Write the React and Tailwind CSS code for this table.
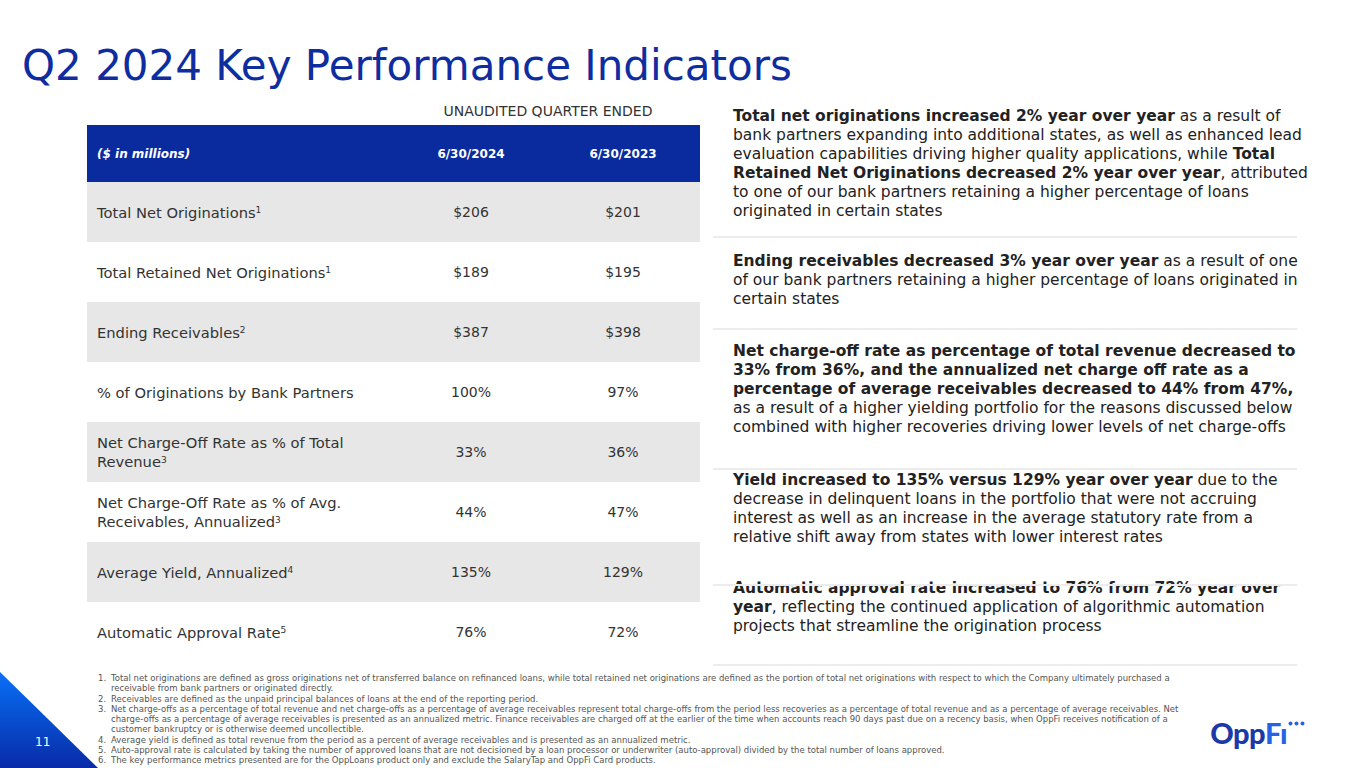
import React from 'react'

const rows = [
  { label: <>Total Net Originations<sup className="text-[9px]">1</sup></>, a: '$206', b: '$201', grey: true },
  { label: <>Total Retained Net Originations<sup className="text-[9px]">1</sup></>, a: '$189', b: '$195' },
  { label: <>Ending Receivables<sup className="text-[9px]">2</sup></>, a: '$387', b: '$398', grey: true },
  { label: <>% of Originations by Bank Partners</>, a: '100%', b: '97%' },
  { label: <>Net Charge-Off Rate as % of Total<br />Revenue<sup className="text-[9px]">3</sup></>, a: '33%', b: '36%', grey: true },
  { label: <>Net Charge-Off Rate as % of Avg.<br />Receivables, Annualized<sup className="text-[9px]">3</sup></>, a: '44%', b: '47%' },
  { label: <>Average Yield, Annualized<sup className="text-[9px]">4</sup></>, a: '135%', b: '129%', grey: true },
  { label: <>Automatic Approval Rate<sup className="text-[9px]">5</sup></>, a: '76%', b: '72%' },
]

const notes = [
  <>Total net originations are defined as gross originations net of transferred balance on refinanced loans, while total retained net originations are defined as the portion of total net originations with respect to which the Company ultimately purchased a<br />receivable from bank partners or originated directly.</>,
  <>Receivables are defined as the unpaid principal balances of loans at the end of the reporting period.</>,
  <>Net charge-offs as a percentage of total revenue and net charge-offs as a percentage of average receivables represent total charge-offs from the period less recoveries as a percentage of total revenue and as a percentage of average receivables. Net<br />charge-offs as a percentage of average receivables is presented as an annualized metric. Finance receivables are charged off at the earlier of the time when accounts reach 90 days past due on a recency basis, when OppFi receives notification of a<br />customer bankruptcy or is otherwise deemed uncollectible.</>,
  <>Average yield is defined as total revenue from the period as a percent of average receivables and is presented as an annualized metric.</>,
  <>Auto-approval rate is calculated by taking the number of approved loans that are not decisioned by a loan processor or underwriter (auto-approval) divided by the total number of loans approved.</>,
  <>The key performance metrics presented are for the OppLoans product only and exclude the SalaryTap and OppFi Card products.</>,
]

function Divider() {
  return <div className="relative z-10 h-[2px] bg-[#ececec]" />
}

export default function App() {
  return (
    <div className="relative w-[1365px] h-[768px] overflow-hidden bg-white text-[#333] font-['DejaVu_Sans',sans-serif]">
      <h1 className="pl-[22px] pt-[42px] text-[42px] leading-[48px] text-[#0f2d9f]">Q2 2024 Key Performance Indicators</h1>

      <div className="flex">
        {/* table */}
        <div className="ml-[87px] w-[613px]">
          <div className="flex h-[35px] pt-[12px] leading-[18px] text-[14px]">
            <div className="w-[309px]" />
            <div className="w-[304px] text-center">UNAUDITED QUARTER ENDED</div>
          </div>
          <div className="flex h-[57px] items-center bg-[#0a2b9e] text-[12px] font-bold text-white">
            <div className="w-[309px] pl-[10px] italic">($ in millions)</div>
            <div className="w-[150px] text-center">6/30/2024</div>
            <div className="w-[154px] text-center">6/30/2023</div>
          </div>
          {rows.map((r, i) => (
            <div key={i} className={`flex h-[60px] items-center text-[14px] leading-[19px] ${r.grey ? 'bg-[#e7e7e7]' : 'bg-white'}`}>
              <div className="w-[309px] pl-[10px] text-[14.7px]">{r.label}</div>
              <div className="w-[150px] text-center">{r.a}</div>
              <div className="w-[154px] text-center">{r.b}</div>
            </div>
          ))}
        </div>

        {/* commentary */}
        <div className="ml-[13px] w-[584px] text-[15.5px] leading-[19px] text-[#222] whitespace-nowrap">
          <div className="h-[146px] pt-[17px] pl-[20px]">
            <b>Total net originations increased 2% year over year</b> as a result of<br />
            bank partners expanding into additional states, as well as enhanced lead<br />
            evaluation capabilities driving higher quality applications, while <b>Total</b><br />
            <b>Retained Net Originations decreased 2% year over year</b>, attributed<br />
            to one of our bank partners retaining a higher percentage of loans<br />
            originated in certain states
          </div>
          <Divider />
          <div className="h-[90px] pt-[14px] pl-[20px]">
            <b>Ending receivables decreased 3% year over year</b> as a result of one<br />
            of our bank partners retaining a higher percentage of loans originated in<br />
            certain states
          </div>
          <Divider />
          <div className="h-[138px] pt-[12px] pl-[20px]">
            <b>Net charge-off rate as percentage of total revenue decreased to</b><br />
            <b>33% from 36%, and the annualized net charge off rate as a</b><br />
            <b>percentage of average receivables decreased to 44% from 47%,</b><br />
            as a result of a higher yielding portfolio for the reasons discussed below<br />
            combined with higher recoveries driving lower levels of net charge-offs
          </div>
          <Divider />
          <div className="h-[114px] pt-[1px] pl-[20px]">
            <b>Yield increased to 135% versus 129% year over year</b> due to the<br />
            decrease in delinquent loans in the portfolio that were not accruing<br />
            interest as well as an increase in the average statutory rate from a<br />
            relative shift away from states with lower interest rates
          </div>
          <Divider />
          <div className="h-[85px] pl-[20px]">
            <div className="-mt-[7px]">
              <b>Automatic approval rate increased to 76% from 72% year over</b><br />
              <b>year</b>, reflecting the continued application of algorithmic automation<br />
              projects that streamline the origination process
            </div>
          </div>
          <Divider />
        </div>
      </div>

      {/* footnotes + logo */}
      <div className="flex">
        <ol className="pl-[98px] pt-[7px] text-[8.5px] leading-[10.3px] text-[#555] whitespace-nowrap">
          {notes.map((n, i) => (
            <li key={i} className="flex">
              <span className="w-[13px] shrink-0">{i + 1}.</span>
              <span>{n}</span>
            </li>
          ))}
        </ol>
        <div className="ml-auto mr-[60px] mt-[52px] flex items-start font-['Lato',sans-serif] text-[29px] font-black leading-none tracking-[-0.5px]">
          <span className="text-[#1b3aa7]">Opp</span>
          <span className="text-[#2563e6]">F&#305;</span>
          <svg width="17" height="5" viewBox="0 0 17 5" className="mt-[3px] ml-[1px]">
            <circle cx="2.5" cy="2.5" r="2" fill="#2563e6" />
            <circle cx="8.5" cy="2.5" r="2" fill="#2563e6" />
            <circle cx="14.5" cy="2.5" r="2" fill="#2563e6" />
          </svg>
        </div>
      </div>

      {/* corner triangle */}
      <div className="absolute left-0 bottom-0 w-[98px] h-[96px] bg-linear-to-b from-[#0b70f6] to-[#0a2aa8] [clip-path:polygon(0_0,0_100%,100%_100%)]">
        <span className="absolute left-[35px] top-[61px] text-[12px] text-white">11</span>
      </div>
    </div>
  )
}
